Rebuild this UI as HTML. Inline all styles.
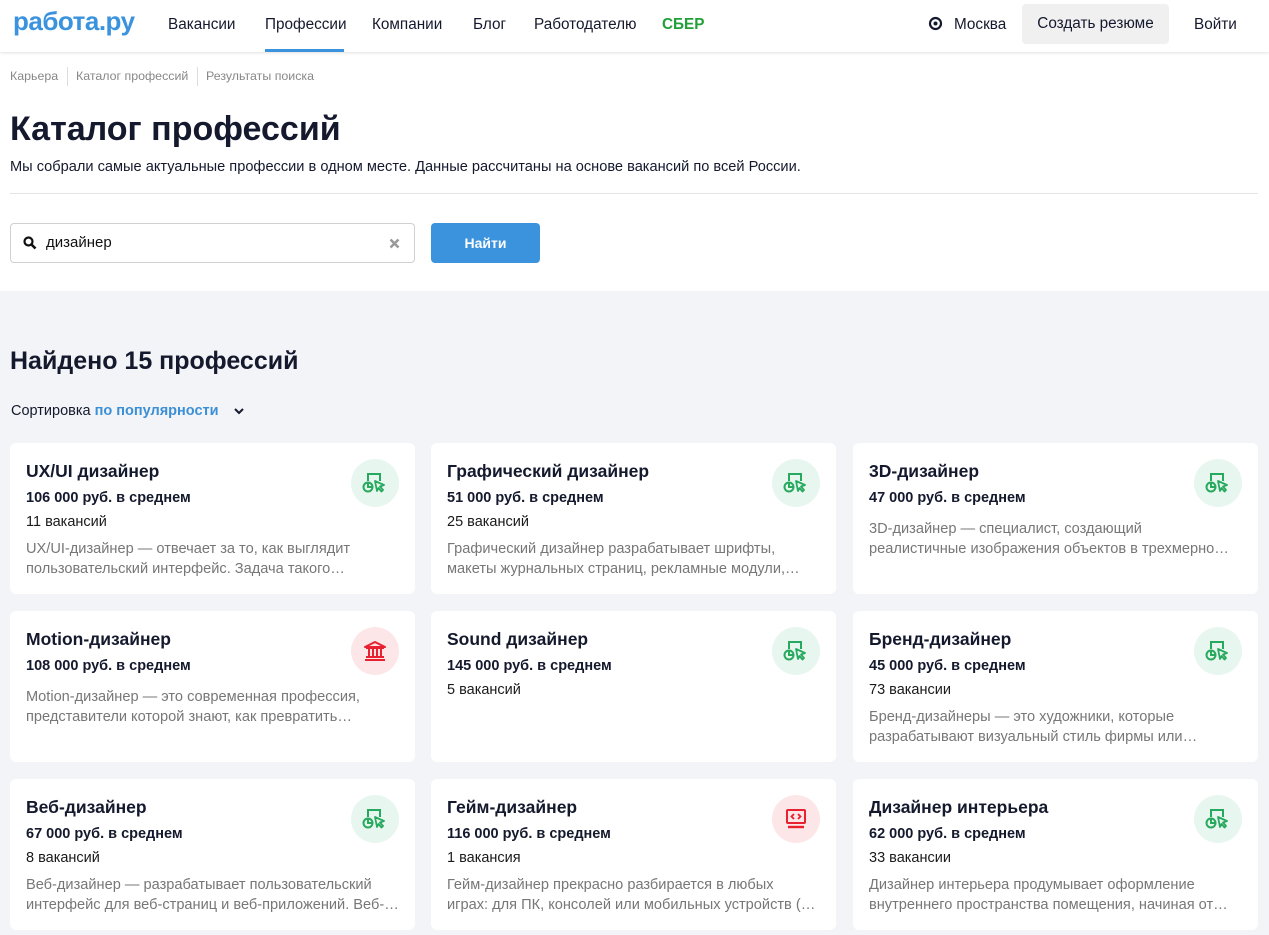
<!DOCTYPE html>
<html><head><meta charset="utf-8"><style>
*{box-sizing:border-box;margin:0;padding:0}
body{width:1269px;height:935px;overflow:hidden;font-family:"Liberation Sans","Noto Sans CJK SC",sans-serif;background:#f3f4f7;color:#1a1a1a;position:relative}
.top{position:absolute;left:0;top:0;width:1269px;height:291px;background:#fff}
.hdr{position:absolute;left:0;top:0;width:1269px;height:52px;background:#fff;box-shadow:0 1px 3px rgba(0,0,0,.12)}
.logo{position:absolute;left:13px;top:6px;font-size:26px;font-weight:bold;color:#3b93de;letter-spacing:-0.5px}
.nav{position:absolute;top:16px;font-size:15.3px;color:#14192d}
.ul{position:absolute;left:265px;top:49px;width:79px;height:3px;background:#3b93de}
.btn{position:absolute;left:1022px;top:4px;width:147px;height:40px;background:#f0f0f1;border-radius:4px;text-align:center;line-height:40px;font-size:15.3px;color:#14192d}
.bc{position:absolute;top:69px;font-size:12.4px;color:#888}
.sep{position:absolute;top:67px;width:1px;height:19px;background:#ddd}
h1{position:absolute;left:10px;top:110px;font-size:34px;font-weight:bold;color:#14192d}
.sub{position:absolute;left:10px;top:159px;font-size:14.6px;color:#14192d}
.hr{position:absolute;left:10px;top:193px;width:1248px;height:1px;background:#e5e5e5}
.inp{position:absolute;left:10px;top:223px;width:405px;height:40px;border:1px solid #d0d0d0;border-radius:4px}
.find{position:absolute;left:431px;top:223px;width:109px;height:40px;background:#3a93dc;border-radius:4px;color:#fff;font-weight:bold;font-size:14px;text-align:center;line-height:40px}
h2{position:absolute;left:10px;top:347px;font-size:25px;font-weight:bold;color:#14192d}
.sort{position:absolute;left:11px;top:403px;font-size:14.5px;color:#14192d}
.card{position:absolute;width:405px;height:151px;background:#fff;border-radius:6px;padding:16px 16px 0 16px}
.t{font-size:17.5px;font-weight:bold;line-height:24px;color:#14192d}
.p{font-size:14.5px;font-weight:bold;line-height:24px;margin-top:3px;color:#14192d}
.v{font-size:14.5px;line-height:24px;color:#1a1a1a}
.d{font-size:14.6px;line-height:20px;color:#777;margin-top:5px;width:372px}
.d div{white-space:nowrap;overflow:hidden}
.d2{margin-top:9px}
.ic{position:absolute;right:16px;top:16px;width:48px;height:48px;border-radius:50%;display:flex;align-items:center;justify-content:center}
.g{background:#e7f6ee}.r{background:#fde6e8}
</style></head><body>
<div class="top"></div>
<div class="hdr">
<div class="logo">работа.ру</div>
<div class="nav" style="left:168px">Вакансии</div>
<div class="nav" style="left:265px">Профессии</div>
<div class="nav" style="left:372px">Компании</div>
<div class="nav" style="left:473px">Блог</div>
<div class="nav" style="left:534px">Работодателю</div>
<div class="nav" style="left:662px;color:#21a038;font-weight:bold">СБЕР</div>
<div class="ul"></div>
<svg style="position:absolute;left:928px;top:16px" width="15" height="16" viewBox="0 0 15 16"><circle cx="7.5" cy="7.5" r="5.5" fill="none" stroke="#14192d" stroke-width="2.2"/><circle cx="7.5" cy="7.5" r="2" fill="#14192d"/></svg>
<div class="nav" style="left:954px">Москва</div>
<div class="btn">Создать резюме</div>
<div class="nav" style="left:1194px">Войти</div>
</div>
<div class="bc" style="left:10px">Карьера</div><div class="sep" style="left:67px"></div>
<div class="bc" style="left:76px">Каталог профессий</div><div class="sep" style="left:197px"></div>
<div class="bc" style="left:206px">Результаты поиска</div>
<h1>Каталог профессий</h1>
<div class="sub">Мы собрали самые актуальные профессии в одном месте. Данные рассчитаны на основе вакансий по всей России.</div>
<div class="hr"></div>
<div class="inp">
<svg style="position:absolute;left:12px;top:12px" width="14" height="14" viewBox="0 0 14 14"><circle cx="5.5" cy="5.5" r="4" fill="none" stroke="#111" stroke-width="2.2"/><path d="M8.5 8.5l4 4" stroke="#111" stroke-width="2.6"/></svg>
<span style="position:absolute;left:35px;top:10px;font-size:15px;color:#111">дизайнер</span>
<svg style="position:absolute;left:378px;top:14px" width="11" height="11" viewBox="0 0 11 11"><path d="M1.5 1.5l8 8M9.5 1.5l-8 8" stroke="#999" stroke-width="2.5"/></svg>
</div>
<div class="find">Найти</div>
<h2>Найдено 15 профессий</h2>
<div class="sort">Сортировка <span style="color:#3b8fd6;font-weight:bold">по популярности</span>
<svg style="margin-left:10px;vertical-align:middle" width="12" height="8" viewBox="0 0 12 8"><path d="M2 2l4 4 4-4" fill="none" stroke="#14192d" stroke-width="2"/></svg></div>

<div class="card" style="left:10px;top:443px"><div class="t">UX/UI дизайнер</div><div class="p">106 000 руб. в среднем</div><div class="v">11 вакансий</div><div class="d"><div>UX/UI-дизайнер — отвечает за то, как выглядит</div><div>пользовательский интерфейс. Задача такого…</div></div><div class="ic g">G</div></div>
<div class="card" style="left:431px;top:443px"><div class="t">Графический дизайнер</div><div class="p">51 000 руб. в среднем</div><div class="v">25 вакансий</div><div class="d"><div>Графический дизайнер разрабатывает шрифты,</div><div>макеты журнальных страниц, рекламные модули,…</div></div><div class="ic g">G</div></div>
<div class="card" style="left:853px;top:443px"><div class="t">3D-дизайнер</div><div class="p">47 000 руб. в среднем</div><div class="d d2"><div>3D-дизайнер — специалист, создающий</div><div>реалистичные изображения объектов в трехмерно…</div></div><div class="ic g">G</div></div>
<div class="card" style="left:10px;top:611px"><div class="t">Motion-дизайнер</div><div class="p">108 000 руб. в среднем</div><div class="d d2"><div>Motion-дизайнер — это современная профессия,</div><div>представители которой знают, как превратить…</div></div><div class="ic r">B</div></div>
<div class="card" style="left:431px;top:611px"><div class="t">Sound дизайнер</div><div class="p">145 000 руб. в среднем</div><div class="v">5 вакансий</div><div class="ic g">G</div></div>
<div class="card" style="left:853px;top:611px"><div class="t">Бренд-дизайнер</div><div class="p">45 000 руб. в среднем</div><div class="v">73 вакансии</div><div class="d"><div>Бренд-дизайнеры — это художники, которые</div><div>разрабатывают визуальный стиль фирмы или…</div></div><div class="ic g">G</div></div>
<div class="card" style="left:10px;top:779px"><div class="t">Веб-дизайнер</div><div class="p">67 000 руб. в среднем</div><div class="v">8 вакансий</div><div class="d"><div>Веб-дизайнер — разрабатывает пользовательский</div><div>интерфейс для веб-страниц и веб-приложений. Веб-…</div></div><div class="ic g">G</div></div>
<div class="card" style="left:431px;top:779px"><div class="t">Гейм-дизайнер</div><div class="p">116 000 руб. в среднем</div><div class="v">1 вакансия</div><div class="d"><div>Гейм-дизайнер прекрасно разбирается в любых</div><div>играх: для ПК, консолей или мобильных устройств (…</div></div><div class="ic r">M</div></div>
<div class="card" style="left:853px;top:779px"><div class="t">Дизайнер интерьера</div><div class="p">62 000 руб. в среднем</div><div class="v">33 вакансии</div><div class="d"><div>Дизайнер интерьера продумывает оформление</div><div>внутреннего пространства помещения, начиная от…</div></div><div class="ic g">G</div></div>

<script>
var G='<svg width="26" height="22" viewBox="0 0 26 22"><path d="M6 9V2h12v7" fill="none" stroke="#27a95e" stroke-width="2"/><circle cx="6" cy="15" r="4.5" fill="none" stroke="#27a95e" stroke-width="2"/><path d="M6 10.5V15h4.5" fill="none" stroke="#27a95e" stroke-width="2"/><path d="M13 9l9 4-4 1.5 3 3.5-1.5 1.5-3-3.5L15 19z" fill="none" stroke="#27a95e" stroke-width="1.8" stroke-linejoin="round"/></svg>';
var B='<svg width="24" height="22" viewBox="0 0 24 22"><path d="M2 7L12 2l10 5z" fill="none" stroke="#e8202f" stroke-width="2" stroke-linejoin="round"/><path d="M3 8h18M6 9v7M10 9v7M14 9v7M18 9v7M3 17h18M2 20h20" stroke="#e8202f" stroke-width="2"/></svg>';
var M='<svg width="24" height="22" viewBox="0 0 24 22"><rect x="3" y="2" width="18" height="13" rx="1" fill="none" stroke="#e8202f" stroke-width="2"/><path d="M10 6l-2.5 2.5L10 11M14 6l2.5 2.5L14 11" fill="none" stroke="#e8202f" stroke-width="1.8"/><path d="M4 19h16" stroke="#e8202f" stroke-width="2.4"/></svg>';
document.querySelectorAll('.ic').forEach(function(e){var k=e.textContent;e.innerHTML=k=='G'?G:k=='B'?B:M;});
</script>
</body></html>
